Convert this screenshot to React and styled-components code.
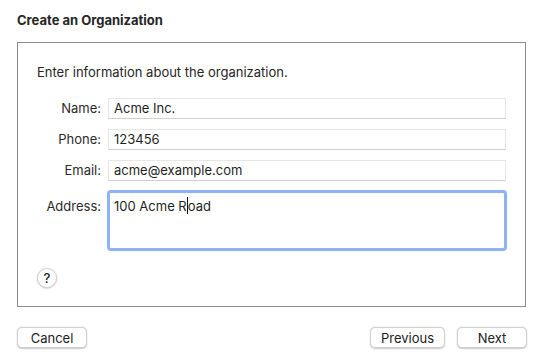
import React from "react";
import styled, { createGlobalStyle } from "styled-components";

const Global = createGlobalStyle`
  html, body { margin: 0; padding: 0; background: #ffffff; }
  body { font-family: Inter, "Noto Sans", sans-serif; color: #1f1f1f; -webkit-font-smoothing: antialiased; }
  * { box-sizing: border-box; }
`;

const Page = styled.div`
  width: 540px;
  height: 360px;
  padding: 12px 14px 0 17px;
  display: flex;
  flex-direction: column;
`;

const Title = styled.h1`
  margin: 0;
  font-size: 13px;
  line-height: 16px;
  font-weight: 700;
  color: #262626;
`;

const Panel = styled.section`
  margin-top: 14px;
  width: 509px;
  height: 265px;
  border: 1px solid #8c8c8c;
  padding: 21px 19px 0 19px;
  display: flex;
  flex-direction: column;
`;

const Intro = styled.p`
  margin: 0;
  font-size: 13px;
  line-height: 16px;
  color: #262626;
`;

const Form = styled.div`
  margin-top: 18px;
  display: grid;
  grid-template-columns: 64px 1fr;
  column-gap: 7px;
  row-gap: 10px;
  align-items: start;
`;

const Label = styled.label`
  text-align: right;
  font-size: 13px;
  line-height: 21px;
  color: #2b2b2b;
  padding-top: ${(p) => (p.$multi ? "5px" : "0")};
`;

const Field = styled.div`
  height: 21px;
  border: 1px solid #e6e6e6;
  border-bottom-color: #cfcfcf;
  background: #fff;
  padding: 0 5px;
  font-size: 13px;
  line-height: 19px;
  color: #1f1f1f;
  white-space: nowrap;
`;

const Area = styled.div`
  height: 61px;
  margin: -1px -1px 0 -1px;
  border: 3px solid #8db3f5;
  border-radius: 4px;
  background: #fff;
  padding: 4px 4px;
  font-size: 13px;
  line-height: 16px;
  color: #1f1f1f;
  white-space: nowrap;
`;

const Caret = styled.span`
  display: inline-block;
  width: 1px;
  height: 17px;
  margin: 0 0 -3px 0;
  background: #111;
`;

const HelpButton = styled.button`
  margin-top: 17px;
  width: 20px;
  height: 20px;
  border-radius: 50%;
  border: 0.5px solid #d4d4d4;
  background: #fff;
  box-shadow: 0 0.5px 1.5px rgba(0, 0, 0, 0.25);
  font-family: inherit;
  font-size: 13px;
  font-weight: 500;
  color: #222;
  padding: 0;
  display: flex;
  align-items: center;
  justify-content: center;
`;

const Footer = styled.div`
  margin-top: 20px;
  width: 510px;
  display: flex;
  align-items: center;
  gap: 12px;
`;

const Spacer = styled.div`
  flex: 1;
`;

const Button = styled.button`
  width: ${(p) => p.$w}px;
  height: 21px;
  border-radius: 5px;
  border: 0.5px solid #d0d0d0;
  background: #fff;
  box-shadow: 0 0.5px 1.5px rgba(0, 0, 0, 0.22);
  font-family: inherit;
  font-size: 13px;
  color: #222;
  padding: 0;
`;

export default function App() {
  return (
    <>
      <Global />
      <Page>
        <Title>Create an Organization</Title>
        <Panel>
          <Intro>Enter information about the organization.</Intro>
          <Form>
            <Label>Name:</Label>
            <Field>Acme Inc.</Field>
            <Label>Phone:</Label>
            <Field>123456</Field>
            <Label>Email:</Label>
            <Field>acme@example.com</Field>
            <Label $multi>Address:</Label>
            <Area>
              100 Acme R<Caret />oad
            </Area>
          </Form>
          <HelpButton>?</HelpButton>
        </Panel>
        <Footer>
          <Button $w={70}>Cancel</Button>
          <Spacer />
          <Button $w={75}>Previous</Button>
          <Button $w={70}>Next</Button>
        </Footer>
      </Page>
    </>
  );
}
